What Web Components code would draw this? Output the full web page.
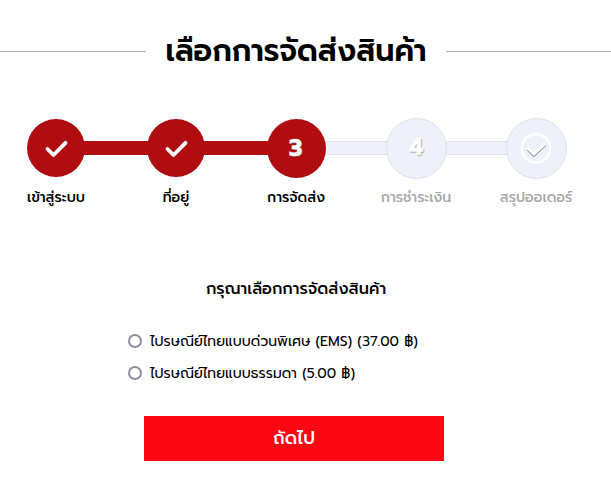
<!DOCTYPE html>
<html lang="th"><head><meta charset="utf-8"><title>เลือกการจัดส่งสินค้า</title>
<style>
html,body{margin:0;background:#fff}
body{width:611px;height:480px;overflow:hidden;font-family:Prompt,Kanit,"Noto Sans Thai","Noto Sans",sans-serif;color:#000}
</style></head><body>
<checkout-page></checkout-page>
<script>
const define=(name,html,setup)=>customElements.define(name,class extends HTMLElement{
  constructor(){super();this.attachShadow({mode:'open'}).innerHTML=html;}
  connectedCallback(){if(setup)setup(this,this.shadowRoot);}
});
define('page-title',`<style>
:host{display:flex;align-items:center;height:60px;gap:20px}
i{height:1px;background:#b2b2b2;flex:1}
h1{margin:0;width:260px;font-size:30px;font-weight:600;line-height:60px;white-space:nowrap;display:flex;justify-content:center}
</style><i></i><h1><slot></slot></h1><i></i>`);
define('step-item',`<style>
:host{display:flex;flex-direction:column;align-items:center;width:120px;flex:none;font-size:14px;font-weight:500;line-height:22px;color:#000}
.rail{display:grid;grid-template-columns:1fr auto 1fr;align-items:center;width:120px;height:62px}
.bar{height:14px;background:#b10c0f}
.dot{box-sizing:border-box;width:58px;height:58px;border-radius:50%;background:#b10c0f;margin:0 -1px;display:grid;place-items:center;color:#fff;font-size:23px;line-height:34px;font-weight:700;-webkit-text-stroke:.4px #fff;text-shadow:1px 1px 1px #6668;z-index:1}
:host([first]) .l,:host([last]) .r{visibility:hidden}
:host([state=current]) .dot{width:59px;height:59px;padding-top:1px;padding-right:1px}
:host([state=current]) .r,:host([state=todo]) .bar{background:#eef1f9;box-shadow:inset 0 1px #e2e4e9,inset 0 -1px #e2e4e9}
:host([state=todo]) .dot{width:61px;height:61px;background:#eef1f9;border:1px solid #dfe1e7;text-shadow:1px 1px 1px #999}
:host([state=todo]){color:#a9a9a9}
.label{margin-top:8px;white-space:nowrap}
svg{display:block}
</style><div class="rail"><span class="bar l"></span><span class="dot"></span><span class="bar r"></span></div><span class="label"><slot></slot></span>`,
(el,root)=>{
  const icon=el.getAttribute('icon'),dot=root.querySelector('.dot');
  if(icon==='check')dot.innerHTML='<svg width="26" height="22" viewBox="0 0 26 22"><path d="M4.5 12l6 6L22.5 5.8" fill="none" stroke="#fff" stroke-width="3.8" stroke-linecap="round" stroke-linejoin="round"/></svg>';
  else if(icon==='circle')dot.innerHTML='<svg width="34" height="34" viewBox="0 0 34 34" fill="none"><circle cx="17" cy="17.5" r="14.2" stroke="#fff" stroke-width="2.2"/><path d="M8.2 18.8l6.7 6.3 11.8-11" stroke="#888d96" stroke-width="1.5"/><path d="M8.2 16.8l6.7 6.3L26.2 12.8" stroke="#fff" stroke-width="2.8"/></svg>';
  else dot.textContent=icon;
});
define('step-list',`<style>:host{display:flex;margin-left:-4px;width:602px}</style><slot></slot>`);
define('ship-option',`<style>
:host{display:block;height:32px}
label{display:flex;align-items:center;gap:8px;height:32px;font-size:14px;white-space:nowrap}
input{appearance:none;box-sizing:border-box;margin:0;width:14px;height:14px;border:2px solid #8f8f9d;border-radius:50%;background:#fff}
</style><label><input type="radio"><span><slot></slot></span></label>`);
define('next-button',`<style>:host{display:block}
button{display:block;width:300px;height:45px;border:0;padding:0;background:#fb0714;color:#fff;font:500 18px/45px Prompt,Kanit,"Noto Sans Thai",sans-serif}</style><button><slot></slot></button>`);
define('checkout-page',`<style>
:host{display:block}
page-title{padding-top:21px;margin-left:-19px}
step-list{margin-top:36px}
h2{margin:67px 0 0;padding-right:19px;text-align:center;font-size:16px;font-weight:500;line-height:26px}
.options{margin:23px 0 0 128px}
next-button{margin:27px 0 0 144px}
</style>
<page-title>เลือกการจัดส่งสินค้า</page-title>
<step-list>
<step-item first icon="check" state="done">เข้าสู่ระบบ</step-item><step-item icon="check" state="done">ที่อยู่</step-item><step-item icon="3" state="current">การจัดส่ง</step-item><step-item icon="4" state="todo">การชำระเงิน</step-item><step-item last icon="circle" state="todo">สรุปออเดอร์</step-item>
</step-list>
<h2>กรุณาเลือกการจัดส่งสินค้า</h2>
<div class="options"><ship-option>ไปรษณีย์ไทยแบบด่วนพิเศษ (EMS) (37.00 ฿)</ship-option><ship-option>ไปรษณีย์ไทยแบบธรรมดา (5.00 ฿)</ship-option></div>
<next-button>ถัดไป</next-button>`);
</script></body></html>
